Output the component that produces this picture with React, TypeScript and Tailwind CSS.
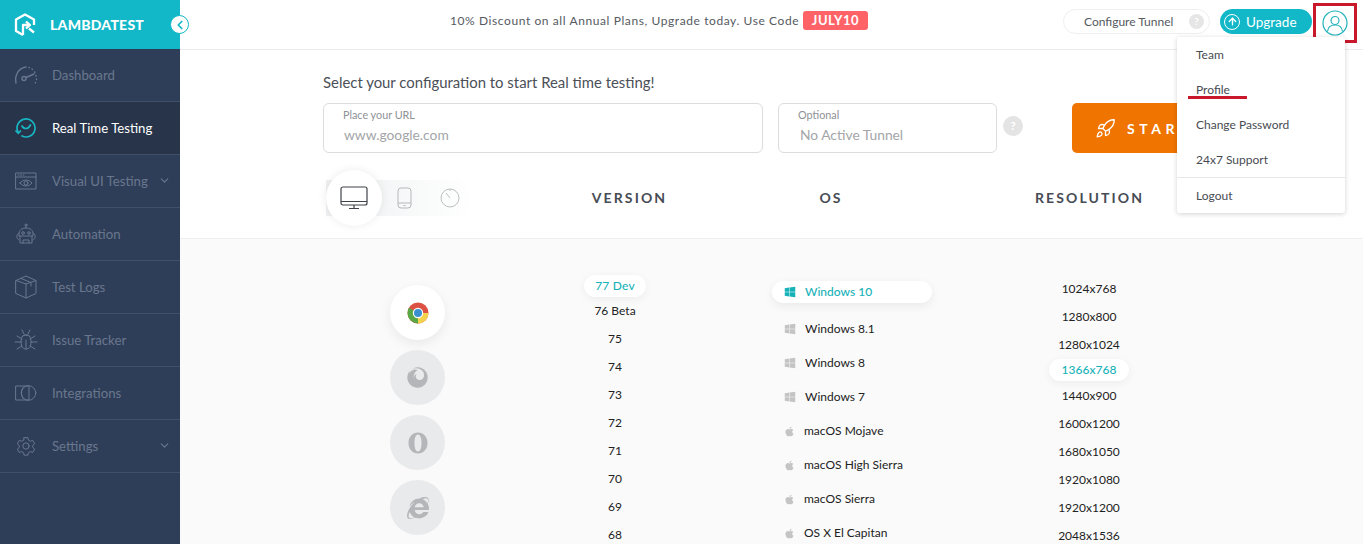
import React from "react";
import { FaApple, FaWindows, FaFirefox, FaInternetExplorer } from "react-icons/fa";
import { ChevronDown, ChevronLeft, Rocket, ArrowUp } from "lucide-react";

const S = { fill: "none", stroke: "currentColor", strokeWidth: 1, strokeLinecap: "round" as const, strokeLinejoin: "round" as const };

const Dash = () => (
  <svg width="24" height="20" viewBox="0 0 24 20" {...S}>
    <path d="M2 18C.5 11 4 3 12 2" strokeWidth="1.4" />
    <path d="M15 2.5l.4.1M18 4l.4.3M20.5 7l.3.4M22 10.5v.5M22.500 14v.5M21.500 17.500l-.2.4" strokeWidth="1.4" />
    <circle cx="10" cy="13.500" r="2" strokeWidth="1.400" />
    <path d="M12 12.500l8-3.500" strokeWidth="1.400" />
  </svg>
);
const Realtime = () => (
  <svg width="22" height="20" viewBox="0 0 22 20" fill="none" stroke="#19b5c2" strokeWidth="1.700" strokeLinecap="round">
    <path d="M3 14A9 9 0 1 1 7 18" />
    <path d="M1 13l2.300 2.200L5.500 13" />
    <path d="M7 8c1 2 3 2.500 4 2.500S14 9.500 15.500 7" />
  </svg>
);
const Visual = () => (
  <svg width="22" height="18" viewBox="0 0 22 18" {...S}>
    <rect x="1" y="1" width="20" height="16" />
    <path d="M1 5h20M3 3h1M5.500 3h1M8 3h1" />
    <path d="M5 11c3-4 9-4 12 0c-3 4-9 4-12 0z" />
    <circle cx="11" cy="11" r="2" />
  </svg>
);
const Bot = () => (
  <svg width="22" height="22" viewBox="0 0 22 22" {...S}>
    <circle cx="11" cy="2" r="1" />
    <path d="M11 3v2M4 11c0-4 3-6 7-6s7 2 7 6v2H4z" />
    <circle cx="8" cy="10" r="1.300" />
    <circle cx="14" cy="10" r="1.300" />
    <path d="M4 10c-3 1-3 6 0 7M18 10c3 1 3 6 0 7M5 13v7h12v-7M8 20v-3h6v3" />
  </svg>
);
const Box = () => (
  <svg width="22" height="24" viewBox="0 0 22 24" {...S}>
    <path d="M1 5.500L11 1l10 4.500v13L11 23 1 18.500zM1 5.500L11 9l10-3.500M11 9v14M6 3.500l10 4v3.500" />
  </svg>
);
const Bug = () => (
  <svg width="24" height="24" viewBox="0 0 24 24" {...S}>
    <path d="M7 14c0-5 2-7 5-7s5 2 5 7-2 7-5 7-5-2-5-7zM12 12v9M8 8.500c0-2 8-2 8 0" />
    <path d="M8 2l2 4M16 2l-2 4M1 14h6M17 14h6M3 8l5 3M21 8l-5 3M3 21l5-3M21 21l-5-3" />
  </svg>
);
const Integr = () => (
  <svg width="22" height="16" viewBox="0 0 22 16" {...S}>
    <path d="M1 1h13v14H1z" />
    <circle cx="13.500" cy="8" r="7.300" />
    <path d="M8 2.500c-2 3-2 8 0 11" />
  </svg>
);
const Gear = () => (
  <svg width="20" height="20" viewBox="0 0 24 24" {...S} strokeWidth={1.200}>
    <path d="M9.700 2h4.600l.6 3 2.300 1.300 2.900-1 2.300 4-2.300 2v2.400l2.300 2-2.300 4-2.900-1-2.300 1.300-.6 3H9.700l-.6-3-2.300-1.300-2.900 1-2.300-4 2.300-2v-2.400l-2.300-2 2.300-4 2.900 1L9.100 5z" />
    <circle cx="12" cy="12" r="3.800" />
  </svg>
);
const Logo = () => (
  <svg width="22" height="24" viewBox="0 0 22 24" fill="none" stroke="#fff" strokeWidth="2.300" strokeLinejoin="round">
    <path d="M9 22L2 18V6.500L11 1.500l9 5V12" />
    <path d="M9 22V12h6M12 8.500l4 3.500-4 3.500M15 15.500l5 4" />
  </svg>
);
const Chrome = () => (
  <svg width="22" height="22" viewBox="0 0 22 22">
    <circle cx="11" cy="11" r="10.500" fill="#dd5144" />
    <path d="M11 11L1.900 5.800A10.500 10.500 0 0 0 11 21.500z" fill="#5aa845" />
    <path d="M11 11h10.500A10.500 10.500 0 0 1 11 21.500z" fill="#f4d24e" />
    <circle cx="11" cy="11" r="5.200" fill="#fff" />
    <circle cx="11" cy="11" r="4" fill="#3a8fd0" />
  </svg>
);
const Opera = () => (
  <svg width="20" height="22" viewBox="0 0 20 22">
    <path fillRule="evenodd" fill="currentColor" d="M10 0.500C15.500 0.500 19.500 5 19.500 11S15.500 21.500 10 21.500 .5 17 .5 11 4.500 .5 10 .5zM10 2.500C7.800 2.500 6.500 6 6.500 11S7.800 19.500 10 19.500 13.500 16 13.500 11 12.200 2.500 10 2.500z" />
  </svg>
);

const nav: [string, React.ReactNode, boolean?][] = [
  ["Dashboard", <Dash />],
  ["Real Time Testing", <Realtime />],
  ["Visual UI Testing", <Visual />, true],
  ["Automation", <Bot />],
  ["Test Logs", <Box />],
  ["Issue Tracker", <Bug />],
  ["Integrations", <Integr />],
  ["Settings", <Gear />, true],
];

const versions = ["76 Beta", "75", "74", "73", "72", "71", "70", "69", "68"];
const oses: [string, "w" | "a"][] = [
  ["Windows 8.1", "w"],
  ["Windows 8", "w"],
  ["Windows 7", "w"],
  ["macOS Mojave", "a"],
  ["macOS High Sierra", "a"],
  ["macOS Sierra", "a"],
  ["OS X El Capitan", "a"],
];
const resA = ["1024x768", "1280x800", "1280x1024"];
const resB = ["1440x900", "1600x1200", "1680x1050", "1920x1080", "1920x1200", "2048x1536"];

const Circle = ({ children }: { children: React.ReactNode }) => (
  <div className="flex h-[55px] w-[55px] items-center justify-center rounded-full bg-[#e9eaec] text-[#b5b6b9]">{children}</div>
);

export default function App() {
  return (
    <div className="relative flex h-[544px] w-[1363px] overflow-hidden bg-white font-['Lato','Liberation_Sans',sans-serif]">
      <aside className="flex w-[180px] shrink-0 flex-col bg-[#2f3e58]">
        <div className="flex h-[49px] shrink-0 items-center gap-[14px] bg-[#12b8c8] pl-[14px]">
          <Logo />
          <span className="text-[14px] font-black tracking-[0.25px] text-white">LAMBDATEST</span>
        </div>
        {nav.map(([label, icon, chev], i) => (
          <div
            key={label}
            className={`flex h-[53px] shrink-0 items-center border-b border-[#40506b] ${i === 1 ? "bg-[#27344a] text-white" : "text-[#69778e]"}`}
          >
            <div className="flex w-[52px] shrink-0 items-center justify-center pr-[1px]">{icon}</div>
            <span className="grow pt-[2px] text-[13.200px]">{label}</span>
            {chev && <ChevronDown size={13} className="mr-[9px] -mt-[2px]" />}
          </div>
        ))}
      </aside>

      <main className="flex min-w-0 grow flex-col">
        <header className="flex h-[50px] shrink-0 items-start border-b border-[#ececec] pl-[270px]">
          <div className="mt-[11px] flex items-center">
            <span className="w-[353px] text-[12px] tracking-[0.59px] whitespace-nowrap text-[#555a61]">10% Discount on all Annual Plans, Upgrade today. Use Code</span>
            <span className="flex h-[19px] w-[65px] items-center justify-center rounded-[3px] bg-[#ff6368] text-[13px] font-bold tracking-[0.5px] text-white">JULY10</span>
          </div>
          <div className="mt-[9px] ml-[195px] flex h-[25px] w-[147px] items-center rounded-full border border-[#efefef] pr-[5px] pl-[20px]">
            <span className="grow text-[12px] text-[#555a61]">Configure Tunnel</span>
            <span className="flex h-[15px] w-[15px] items-center justify-center rounded-full bg-[#e6e6e6] text-[10px] font-bold text-white">?</span>
          </div>
          <div className="mt-[9px] ml-[10px] flex h-[25px] w-[92px] items-center gap-[6px] rounded-full bg-[#12b8c8] pl-[4px] text-[13.500px] text-white">
            <span className="flex h-[16px] w-[16px] items-center justify-center rounded-full border-[1.5px] border-white">
              <ArrowUp size={11} strokeWidth={3} />
            </span>
            <span className="pt-[1px]">Upgrade</span>
          </div>
        </header>

        <section className="h-[189px] shrink-0 border-b border-[#efefef] pl-[143px]">
          <h1 className="mt-[23px] text-[14.900px] leading-[19px] text-[#4b5058]">Select your configuration to start Real time testing!</h1>
          <div className="mt-[11px] flex items-start">
            <div className="h-[50px] w-[440px] rounded-[6px] border border-[#dcdcdc] pt-[4px] pl-[19px]">
              <div className="text-[10.800px] leading-[14px] text-[#8e9196]">Place your URL</div>
              <div className="mt-[4px] ml-[1px] text-[13.800px] leading-[18px] text-[#a3a5a8]">www.google.com</div>
            </div>
            <div className="ml-[15px] h-[50px] w-[219px] rounded-[6px] border border-[#dcdcdc] pt-[4px] pl-[19px]">
              <div className="text-[10.800px] leading-[14px] text-[#8e9196]">Optional</div>
              <div className="mt-[4px] ml-[2px] text-[13.800px] leading-[18px] text-[#a3a5a8]">No Active Tunnel</div>
            </div>
            <div className="mt-[13px] ml-[6px] flex h-[20px] w-[20px] items-center justify-center rounded-full bg-[#e4e4e4] text-[12px] font-bold text-white">?</div>
            <div className="ml-[49px] flex h-[50px] w-[200px] items-center gap-[11px] rounded-[5px] bg-[#f07400] pl-[23px] text-white">
              <Rocket size={21} strokeWidth={1.500} />
              <span className="text-[14px] font-bold tracking-[4.600px]">START</span>
            </div>
          </div>
          <div className="mt-[27px] flex items-center">
            <div className="w-[205px] shrink-0 pl-[3px]">
              <div className="relative flex h-[36px] w-[146px] items-center rounded-r-full bg-gradient-to-r from-[#eef0f1] to-[#ffffff]">
                <div className="absolute top-[-10px] left-0 flex h-[56px] w-[56px] items-center justify-center rounded-full bg-white shadow-[0_0_10px_rgba(0,0,0,0.08)]">
                  <svg width="28" height="24" viewBox="0 0 28 24" fill="none" stroke="#3f4349" strokeWidth="1.200">
                    <rect x="1" y="1" width="26" height="18" rx="2" />
                    <path d="M1 15.500h26M14 19v3M9 22.500h10" />
                  </svg>
                </div>
                <svg className="ml-[71px]" width="15" height="22" viewBox="0 0 15 22" fill="none" stroke="#b5b7b9" strokeWidth="1">
                  <rect x="1" y="1" width="13" height="20" rx="3" />
                  <path d="M1 16h13M6.500 18.500h2" />
                </svg>
                <svg className="ml-[28px]" width="20" height="20" viewBox="0 0 20 20" fill="none" stroke="#bdbfc1" strokeWidth="1">
                  <circle cx="10" cy="10" r="9" />
                  <path d="M10 10L6 5M10 1v2" />
                </svg>
              </div>
            </div>
            <div className="w-[203px] pb-[2px] text-center text-[14px] font-bold tracking-[2.100px] text-[#474c55]">VERSION</div>
            <div className="w-[200px] pb-[2px] text-center text-[14px] font-bold tracking-[2.100px] text-[#474c55]">OS</div>
            <div className="ml-[60px] w-[197px] pb-[2px] text-center text-[14px] font-bold tracking-[2.100px] text-[#474c55]">RESOLUTION</div>
          </div>
        </section>

        <section className="flex min-h-0 grow overflow-hidden bg-[#fafafa] text-[12px] text-[#222]">
          <div className="ml-[210px] flex w-[55px] shrink-0 flex-col gap-[10px] pt-[46px]">
            <div className="flex h-[55px] w-[55px] items-center justify-center rounded-full bg-white shadow-[0_4px_12px_rgba(0,0,0,0.07)]">
              <Chrome />
            </div>
            <Circle><FaFirefox size={21} /></Circle>
            <Circle><Opera /></Circle>
            <Circle><FaInternetExplorer size={22} /></Circle>
          </div>

          <div className="ml-[139px] flex w-[62px] shrink-0 flex-col items-center pt-[36px]">
            <div className="flex h-[22px] w-[62px] shrink-0 items-center justify-center rounded-full bg-white font-medium tracking-[0.2px] text-[#17b2b8] shadow-[0_2px_8px_rgba(0,0,0,0.06)]">77 Dev</div>
            {versions.map((v) => (
              <div key={v} className="flex h-[28px] shrink-0 items-center justify-center first:-mt-[1px]">{v}</div>
            ))}
          </div>

          <div className="ml-[126px] w-[160px] shrink-0 pt-[42px]">
            <div className="flex h-[22px] items-center gap-[9px] rounded-full bg-white pl-[12px] font-medium text-[#17b2b8] shadow-[0_3px_10px_rgba(0,0,0,0.07)]">
              <FaWindows size={12} />
              Windows 10
            </div>
            <div className="mt-[9px] flex flex-col">
              {oses.map(([n, k]) => (
                <div key={n} className="flex h-[34px] items-center gap-[9px] pl-[12px]">
                  {k === "w" ? <FaWindows size={12} className="text-[#c4c4c4]" /> : <FaApple size={11} className="text-[#c4c4c4]" />}
                  {n}
                </div>
              ))}
            </div>
          </div>

          <div className="ml-[117px] flex w-[80px] shrink-0 flex-col items-center pt-[36px]">
            {resA.map((r) => (
              <div key={r} className="flex h-[28px] shrink-0 items-center">{r}</div>
            ))}
            <div className="mb-[1px] flex h-[22px] w-[80px] shrink-0 items-center justify-center rounded-full bg-white font-medium text-[#17b2b8] shadow-[0_2px_8px_rgba(0,0,0,0.06)]">1366x768</div>
            {resB.map((r) => (
              <div key={r} className="flex h-[28px] shrink-0 items-center">{r}</div>
            ))}
          </div>
        </section>
      </main>

      <button className="absolute top-[15px] left-[170px] flex h-[19px] w-[19px] items-center justify-center rounded-full border border-[#12b8c8] bg-white text-[#12b8c8]">
        <ChevronLeft size={14} strokeWidth={3} />
      </button>

      <div className="absolute top-[3px] left-[1313px] flex h-[40px] w-[44px] items-center justify-center border-[3px] border-[#c9182b]">
        <svg width="26" height="26" viewBox="0 0 26 26" fill="none" stroke="#22b3bb" strokeWidth="1.200">
          <circle cx="13" cy="13" r="12" />
          <circle cx="13" cy="10.500" r="4" />
          <path d="M5.500 21.500c.5-5 4-6.500 7.500-6.500s7 1.500 7.500 6.500" />
        </svg>
      </div>

      <div className="absolute top-[37px] left-[1177px] w-[168px] rounded-[3px] bg-white text-[12px] text-[#484c52] shadow-[0_1px_5px_rgba(0,0,0,0.18)]">
        <div className="flex h-[35px] items-center pl-[19px]">Team</div>
        <div className="relative flex h-[35px] items-center pl-[19px]">
          Profile
          <span className="absolute top-[24px] left-[11px] h-[3px] w-[59px] bg-[#c9182b]" />
        </div>
        <div className="flex h-[35px] items-center pl-[19px]">Change Password</div>
        <div className="flex h-[35px] items-center pl-[19px]">24x7 Support</div>
        <div className="flex h-[36px] items-center border-t border-[#e8e8e8] pl-[19px]">Logout</div>
      </div>
    </div>
  );
}
